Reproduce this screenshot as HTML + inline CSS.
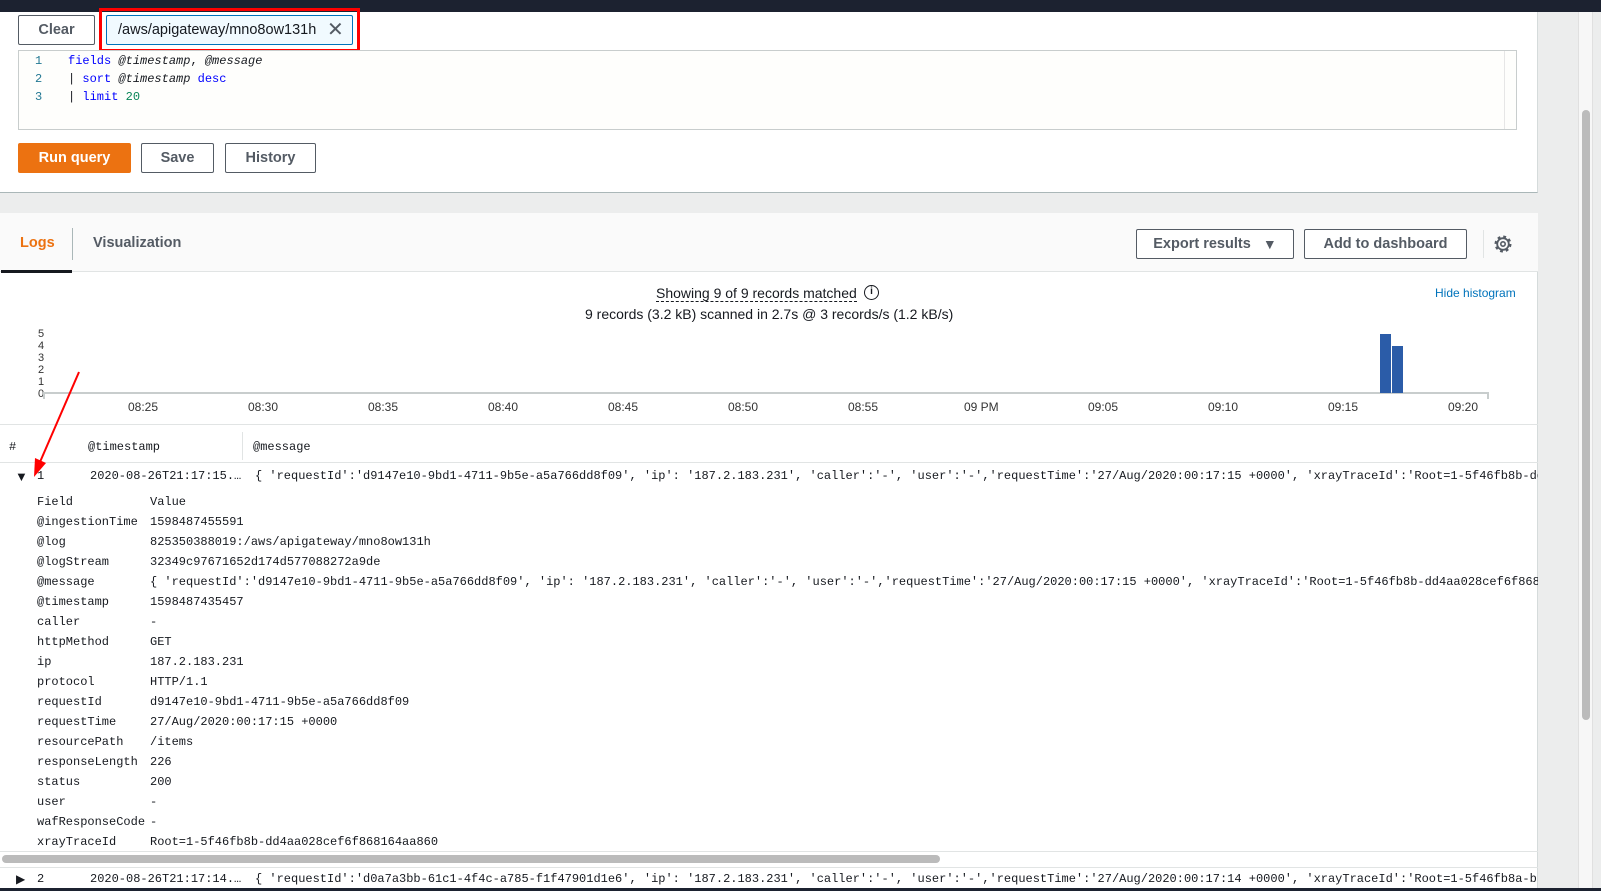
<!DOCTYPE html>
<html><head><meta charset="utf-8"><style>
*{box-sizing:border-box;margin:0;padding:0}
body{width:1601px;height:891px;overflow:hidden;background:#eceded;position:relative;font-family:"Liberation Sans",sans-serif;color:#16191f}
.a{position:absolute;white-space:nowrap}
.btn{position:absolute;border:1px solid #545b64;background:#fff;border-radius:2px;font-weight:bold;font-size:14.5px;color:#545b64;display:flex;align-items:center;justify-content:center}
.mono{font-family:"Liberation Mono",monospace;font-size:12px}
.t{font-size:12px;color:#333}
</style></head><body>
<div class="a" style="left:0;top:0;width:1601px;height:12px;background:#1c2230"></div>
<div class="a" style="left:0;top:12px;width:1538px;height:181px;background:#fff;border-right:1px solid #d5dbdb;border-bottom:1px solid #aab7b8"></div>
<div class="btn" style="left:18px;top:15px;width:77px;height:30px">Clear</div>
<div class="a" style="left:106px;top:15px;width:247px;height:30px;background:#f1faff;border:1px solid #0073bb;border-radius:2px;font-size:14.5px;line-height:28px;padding-left:11px;color:#16191f">/aws/apigateway/mno8ow131h<span style="position:absolute;left:220px;top:0;font-size:20px;color:#545b64">✕</span></div>
<div class="a" style="left:99px;top:8px;width:261px;height:44px;border:3px solid #f00"></div>
<div class="a" style="left:18px;top:50px;width:1499px;height:80px;background:#fefefc;border:1px solid #c8cdcd"></div>
<div class="a" style="left:1504px;top:51px;width:1px;height:78px;background:#e6e6e6"></div>
<div class="a mono" style="left:35px;top:52px;line-height:18px;color:#237893">1<br>2<br>3</div>
<div class="a mono" style="left:68px;top:52px;line-height:18px"><span style="color:#00f">fields</span> <i>@timestamp</i>, <i>@message</i><br>| <span style="color:#00f">sort</span> <i>@timestamp</i> <span style="color:#00f">desc</span><br>| <span style="color:#00f">limit</span> <span style="color:#098658">20</span></div>
<div class="btn" style="left:18px;top:143px;width:113px;height:30px;background:#ec7211;border-color:#ec7211;color:#fff">Run query</div>
<div class="btn" style="left:141px;top:143px;width:73px;height:30px">Save</div>
<div class="btn" style="left:225px;top:143px;width:91px;height:30px">History</div>
<div class="a" style="left:1578px;top:12px;width:15px;height:879px;background:#f7f7f7;border-left:1px solid #e0e0e0;border-right:1px solid #e0e0e0"></div>
<div class="a" style="left:1582px;top:110px;width:8px;height:610px;background:#bbb;border-radius:4px"></div>
<!-- results -->
<div class="a" style="left:0;top:213px;width:1538px;height:678px;background:#fff;border-right:1px solid #d5dbdb"></div>
<div class="a" style="left:0;top:213px;width:1538px;height:59px;background:#fafafa;border-bottom:1px solid #e1e4e4"></div>
<div class="a" style="left:20px;top:235px;font-size:14.5px;font-weight:bold;color:#ec7211">Logs</div>
<div class="a" style="left:72px;top:228px;width:1px;height:32px;background:#aab7b8"></div>
<div class="a" style="left:93px;top:235px;font-size:14.5px;font-weight:bold;color:#545b64">Visualization</div>
<div class="a" style="left:1px;top:270px;width:71px;height:3px;background:#16191f"></div>
<div class="btn" style="left:1136px;top:229px;width:158px;height:30px">Export results&nbsp;&nbsp;&nbsp;<span style="font-size:14px">▼</span></div>
<div class="btn" style="left:1304px;top:229px;width:163px;height:30px">Add to dashboard</div>
<div class="a" style="left:1483px;top:230px;width:1px;height:28px;background:#e1e4e4"></div>
<svg class="a" style="left:1493px;top:234px" width="20" height="20" viewBox="0 0 20 20"><circle cx="10" cy="10" r="7" fill="none" stroke="#545b64" stroke-width="3" stroke-dasharray="2.7 2.8"/><circle cx="10" cy="10" r="5.8" fill="none" stroke="#545b64" stroke-width="1.8"/><circle cx="10" cy="10" r="2.2" fill="none" stroke="#545b64" stroke-width="1.6"/></svg>
<div class="a" style="left:1435px;top:286px;font-size:12px;color:#0073bb">Hide histogram</div>
<div class="a" style="left:656px;top:285px;font-size:14px;border-bottom:1px dashed #16191f;line-height:16px">Showing 9 of 9 records matched</div>
<div class="a" style="left:864px;top:285px;width:15px;height:15px;border:1.5px solid #16191f;border-radius:50%;font-size:10px;font-weight:bold;text-align:center;line-height:12px">i</div>
<div class="a" style="left:585px;top:306px;font-size:14px">9 records (3.2 kB) scanned in 2.7s @ 3 records/s (1.2 kB/s)</div>
<div class="a" style="left:38px;top:328px;font-size:11px;line-height:12px;color:#333">5<br>4<br>3<br>2<br>1<br>0</div>
<div class="a" style="left:43px;top:392px;width:1446px;height:2px;background:#c8cdcd"></div>
<div class="a" style="left:43px;top:392px;width:2px;height:7px;background:#c8cdcd"></div>
<div class="a" style="left:1487px;top:392px;width:2px;height:7px;background:#c8cdcd"></div>
<div class="a" style="left:1380px;top:334px;width:11px;height:59px;background:#2b5ca8"></div>
<div class="a" style="left:1392px;top:346px;width:11px;height:47px;background:#2b5ca8"></div>
<div class="a" style="left:0;top:424px;width:1538px;height:1px;background:#e1e4e4"></div>
<div class="a mono" style="left:9px;top:440px">#</div>
<div class="a mono" style="left:88px;top:440px">@timestamp</div>
<div class="a" style="left:242px;top:432px;width:1px;height:28px;background:#e1e4e4"></div>
<div class="a mono" style="left:253px;top:440px">@message</div>
<div class="a" style="left:0;top:462px;width:1538px;height:1px;background:#e1e4e4"></div>
<div class="a" style="left:15px;top:469px;font-size:13px">▼</div>
<div class="a mono" style="left:37px;top:469px">1</div>
<div class="a mono" style="left:90px;top:469px">2020-08-26T21:17:15.…</div>
<div class="a mono" style="left:255px;top:469px;width:1283px;overflow:hidden">{ 'requestId':'d9147e10-9bd1-4711-9b5e-a5a766dd8f09', 'ip': '187.2.183.231', 'caller':'-', 'user':'-','requestTime':'27/Aug/2020:00:17:15 +0000', 'xrayTraceId':'Root=1-5f46fb8b-dd4aa028cef6f868164aa860'</div>
<div class="a mono" style="left:37px;top:492px;line-height:20px">Field<br>@ingestionTime<br>@log<br>@logStream<br>@message<br>@timestamp<br>caller<br>httpMethod<br>ip<br>protocol<br>requestId<br>requestTime<br>resourcePath<br>responseLength<br>status<br>user<br>wafResponseCode<br>xrayTraceId</div>
<div class="a mono" style="left:150px;top:492px;line-height:20px;width:1388px;overflow:hidden">Value<br>1598487455591<br>825350388019:/aws/apigateway/mno8ow131h<br>32349c97671652d174d577088272a9de<br>{ 'requestId':'d9147e10-9bd1-4711-9b5e-a5a766dd8f09', 'ip': '187.2.183.231', 'caller':'-', 'user':'-','requestTime':'27/Aug/2020:00:17:15 +0000', 'xrayTraceId':'Root=1-5f46fb8b-dd4aa028cef6f868164aa860'<br>1598487435457<br>-<br>GET<br>187.2.183.231<br>HTTP/1.1<br>d9147e10-9bd1-4711-9b5e-a5a766dd8f09<br>27/Aug/2020:00:17:15 +0000<br>/items<br>226<br>200<br>-<br>-<br>Root=1-5f46fb8b-dd4aa028cef6f868164aa860</div>
<div class="a" style="left:0;top:851px;width:1538px;height:1px;background:#e1e4e4"></div>
<div class="a" style="left:2px;top:855px;width:938px;height:8px;background:#bbb;border-radius:4px"></div>
<div class="a" style="left:0;top:867px;width:1538px;height:1px;background:#e1e4e4"></div>
<div class="a" style="left:16px;top:872px;font-size:12px">▶</div>
<div class="a mono" style="left:37px;top:872px">2</div>
<div class="a mono" style="left:90px;top:872px">2020-08-26T21:17:14.…</div>
<div class="a mono" style="left:255px;top:872px;width:1283px;overflow:hidden">{ 'requestId':'d0a7a3bb-61c1-4f4c-a785-f1f47901d1e6', 'ip': '187.2.183.231', 'caller':'-', 'user':'-','requestTime':'27/Aug/2020:00:17:14 +0000', 'xrayTraceId':'Root=1-5f46fb8a-b'</div>
<div class="a" style="left:0;top:888px;width:1601px;height:3px;background:#1c2230"></div>
<svg class="a" style="left:0;top:0" width="1601" height="891"><line x1="79" y1="372" x2="40" y2="462" stroke="#f00" stroke-width="2"/><polygon points="34,477 35,458 46,463" fill="#f00"/></svg>
<div class="a t" style="left:0;top:0">
<span class="a" style="left:128px;top:400px">08:25</span><span class="a" style="left:248px;top:400px">08:30</span><span class="a" style="left:368px;top:400px">08:35</span><span class="a" style="left:488px;top:400px">08:40</span><span class="a" style="left:608px;top:400px">08:45</span><span class="a" style="left:728px;top:400px">08:50</span><span class="a" style="left:848px;top:400px">08:55</span><span class="a" style="left:964px;top:400px">09 PM</span><span class="a" style="left:1088px;top:400px">09:05</span><span class="a" style="left:1208px;top:400px">09:10</span><span class="a" style="left:1328px;top:400px">09:15</span><span class="a" style="left:1448px;top:400px">09:20</span>
</div>
</body></html>
